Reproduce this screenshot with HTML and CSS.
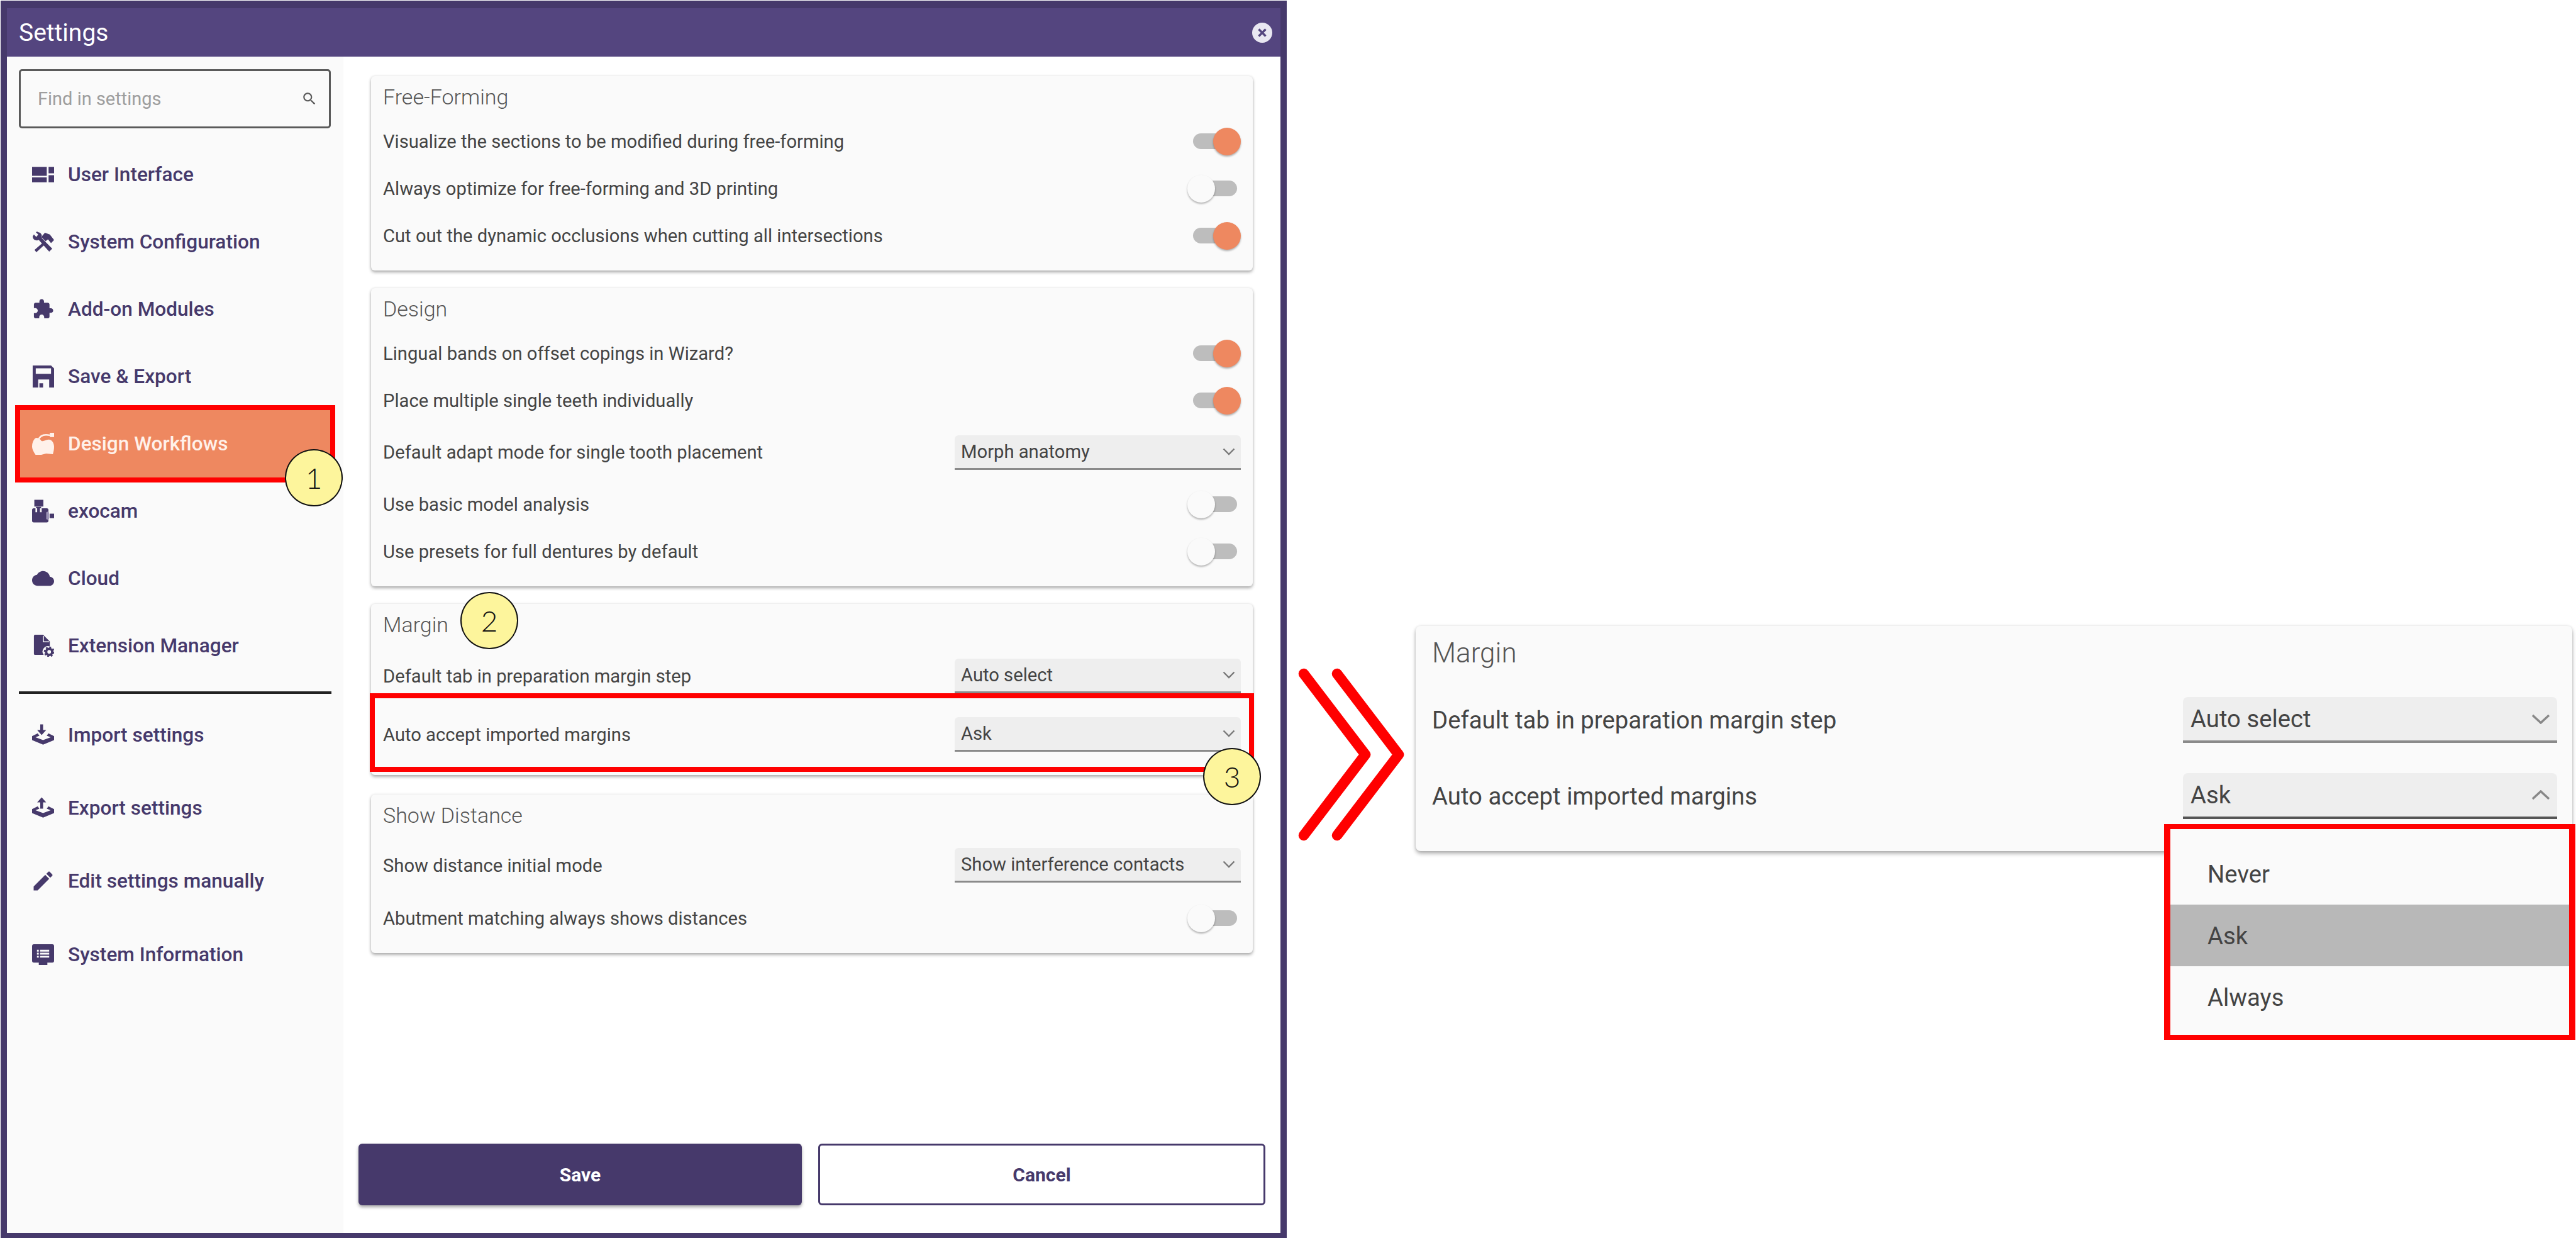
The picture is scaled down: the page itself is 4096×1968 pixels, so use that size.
FILE: index.html
```html
<!DOCTYPE html>
<html lang="en">
<head>
<meta charset="utf-8">
<title>Settings</title>
<link rel="stylesheet" href="styles.css">
</head>
<body>
<div class="page">
  <section class="window">
    <header class="titlebar">
      <h1 class="window-title">Settings</h1>
      <svg class="close" viewBox="0 0 32 32"><circle cx="16" cy="16" r="16" fill="#e9e7f2"/><path d="M10.500 10.500l11 11M21.500 10.500l-11 11" stroke="#54457f" stroke-width="3.400" fill="none"/></svg>
    </header>
    <div class="window-body">
      <aside class="sidebar">
        <div class="search">
          <span class="search-text">Find in settings</span>
          <svg class="search-icon" viewBox="0 0 24 24"><path fill="#5a5a5a" d="M15.500 14h-.79l-.28-.27C15.410 12.590 16 11.110 16 9.500 16 5.910 13.090 3 9.500 3S3 5.910 3 9.500 5.910 16 9.500 16c1.610 0 3.090-.59 4.230-1.570l.27.28v.79l5 4.990L20.490 19l-4.990-5zm-6 0C7.010 14 5 11.990 5 9.500S7.010 5 9.500 5 14 7.010 14 9.500 11.990 14 9.500 14z"/></svg>
        </div>
        <nav class="nav">
          <a class="nav-item"><svg class="icon" viewBox="0 0 36 36"><path d="M0 5.500h24V20H0zM0 22.500h24v8H0zM27 5.500h9V16h-9zM27 19h9v11.500h-9z"/></svg><span>User Interface</span></a>
          <a class="nav-item"><svg class="icon" viewBox="0 0 36 36"><path d="M9 1L6 2l4 4-3 4-4-4-2 3c0 5 5 8 10 6l17 19 5-5-17-17c1-6-2-10-7-10zM15 10l6-7 8 3 7 9-5 5-5-6-4 3zM18 19L4 31l3 4 14-13z"/></svg><span>System Configuration</span></a>
          <a class="nav-item"><svg class="icon" viewBox="0 0 24 24"><path d="M20.500 11H19V7c0-1.100-.9-2-2-2h-4V3.500C13 2.120 11.880 1 10.500 1S8 2.120 8 3.500V5H4c-1.100 0-1.990.9-1.990 2v3.800H3.500c1.490 0 2.700 1.210 2.700 2.700s-1.210 2.700-2.700 2.700H2V20c0 1.100.9 2 2 2h3.800v-1.500c0-1.490 1.210-2.700 2.700-2.700 1.490 0 2.700 1.210 2.700 2.700V22H17c1.100 0 2-.9 2-2v-4h1.500c1.380 0 2.500-1.120 2.500-2.500S21.880 11 20.500 11z"/></svg><span>Add-on Modules</span></a>
          <a class="nav-item"><svg class="icon" viewBox="0 0 36 36"><path fill-rule="evenodd" d="M1 0h30l5 5v31H1zM6 4.500v9h25v-9zM10 23v13h2v-7h6v7h10V23z"/></svg><span>Save &amp; Export</span></a>
          <a class="nav-item nav-item--active">
            <svg class="icon" viewBox="0 0 36 36"><path d="M5 9C9 7 13 10 15 13c4 2 7-2 12-2 6 0 9 6 9 12 0 5-1 8-2 12l-11-1-16 4C4 33 0 28 0 22 0 17 2 12 5 9z"/><path d="M10 12C13 4 20 2 29 4" fill="none" stroke="#fff1ea" stroke-width="2.600"/><path d="M29 0h7v7h-7z"/></svg>
            <span>Design Workflows</span>
            <span class="frame frame--nav"></span>
            <span class="badge badge--one">1</span>
          </a>
          <a class="nav-item"><svg class="icon icon--tall" viewBox="6 8 39 40"><path d="M10 8h16v12H10zM13 20.500h9V23h-9z"/><rect x="6" y="23" width="29" height="25" rx="3"/><path fill="#fafafa" d="M12 23h3v7h-3zM20 23h3v7h-3z"/><rect x="31" y="29" width="5" height="14" rx="2" fill="#9a91b5"/><path d="M37 32.500h8v8h-8z"/></svg><span>exocam</span></a>
          <a class="nav-item"><svg class="icon" viewBox="0 -4 24 24"><path d="M19.350 6.040C18.670 2.590 15.640 0 12 0 9.110 0 6.600 1.640 5.350 4.040 2.340 4.360 0 6.910 0 10c0 3.310 2.690 6 6 6h13c2.760 0 5-2.240 5-5 0-2.640-2.050-4.780-4.650-4.960z"/></svg><span>Cloud</span></a>
          <a class="nav-item"><svg class="icon" viewBox="-3 0 36 36"><path d="M2 0h13l11 11v8a9 9 0 0 0-10 14H2a2 2 0 0 1-2-2V2a2 2 0 0 1 2-2z"/><path d="M15.500 2v9.500H25" fill="none" stroke="#fafafa" stroke-width="1.500"/><circle cx="25" cy="28" r="5" fill="none" stroke="#46396b" stroke-width="4"/><circle cx="25" cy="28" r="7.500" fill="none" stroke="#46396b" stroke-width="2.500" stroke-dasharray="3 2.890"/></svg><span>Extension Manager</span></a>
        </nav>
        <hr class="divider">
        <nav class="nav nav--tools">
          <a class="nav-item"><svg class="icon" viewBox="0 0 39 38"><path d="M14.500 0h5v10h5.500l-8 9-8-9h5.500zM0 21l10-5 3 4-7 3 13.500 5L33 23l-7-3 3-4 10 5v7l-19.500 8L0 28z"/></svg><span>Import settings</span></a>
          <a class="nav-item"><svg class="icon" viewBox="0 0 39 38"><path d="M17 0l8 9h-5.500v11h-5V9H9zM0 21l10-5 3 4-7 3 13.500 5L33 23l-7-3 3-4 10 5v7l-19.500 8L0 28z"/></svg><span>Export settings</span></a>
          <a class="nav-item"><svg class="icon" viewBox="1.500 1.500 21 21"><path d="M3 17.250V21h3.750L17.810 9.940l-3.750-3.750L3 17.250zM20.710 7.040c.39-.39.39-1.020 0-1.410l-2.340-2.340c-.39-.39-1.020-.39-1.410 0l-1.830 1.830 3.750 3.750 1.830-1.830z"/></svg><span>Edit settings manually</span></a>
          <a class="nav-item"><svg class="icon" viewBox="0 -1 36 36"><path fill-rule="evenodd" d="M3 0h30a3 3 0 0 1 3 3v24a3 3 0 0 1-3 3h-8v4H11v-4H3a3 3 0 0 1-3-3V3a3 3 0 0 1 3-3zM8 9v3h3V9zM13 9v3h15V9zM8 14v3h3v-3zM13 14v3h15v-3zM8 19v3h3v-3zM13 19v3h15v-3z"/></svg><span>System Information</span></a>
        </nav>
      </aside>
      <main class="main">
        <section class="card">
          <h2 class="card-title">Free-Forming</h2>
          <div class="row"><span>Visualize the sections to be modified during free-forming</span><span class="toggle toggle--on"><i class="knob"></i></span></div>
          <div class="row"><span>Always optimize for free-forming and 3D printing</span><span class="toggle"><i class="knob"></i></span></div>
          <div class="row"><span>Cut out the dynamic occlusions when cutting all intersections</span><span class="toggle toggle--on"><i class="knob"></i></span></div>
        </section>
        <section class="card">
          <h2 class="card-title">Design</h2>
          <div class="row"><span>Lingual bands on offset copings in Wizard?</span><span class="toggle toggle--on"><i class="knob"></i></span></div>
          <div class="row"><span>Place multiple single teeth individually</span><span class="toggle toggle--on"><i class="knob"></i></span></div>
          <div class="row row--select"><span>Default adapt mode for single tooth placement</span><span class="select"><span>Morph anatomy</span><svg class="chev" viewBox="0 0 20 12"><path d="M1.500 1.500L10 10l8.500-8.500"/></svg></span></div>
          <div class="row"><span>Use basic model analysis</span><span class="toggle"><i class="knob"></i></span></div>
          <div class="row"><span>Use presets for full dentures by default</span><span class="toggle"><i class="knob"></i></span></div>
        </section>
        <section class="card card--margin">
          <h2 class="card-title">Margin</h2>
          <span class="badge badge--two">2</span>
          <div class="row row--tall"><span>Default tab in preparation margin step</span><span class="select"><span>Auto select</span><svg class="chev" viewBox="0 0 20 12"><path d="M1.500 1.500L10 10l8.500-8.500"/></svg></span></div>
          <div class="row row--tall"><span>Auto accept imported margins</span><span class="select"><span>Ask</span><svg class="chev" viewBox="0 0 20 12"><path d="M1.500 1.500L10 10l8.500-8.500"/></svg></span></div>
          <span class="frame frame--row"></span>
          <span class="badge badge--three">3</span>
        </section>
        <section class="card card--distance">
          <h2 class="card-title">Show Distance</h2>
          <div class="row row--tall"><span>Show distance initial mode</span><span class="select"><span>Show interference contacts</span><svg class="chev" viewBox="0 0 20 12"><path d="M1.500 1.500L10 10l8.500-8.500"/></svg></span></div>
          <div class="row"><span>Abutment matching always shows distances</span><span class="toggle"><i class="knob"></i></span></div>
        </section>
        <footer class="actions">
          <button class="btn btn--primary">Save</button>
          <button class="btn btn--ghost">Cancel</button>
        </footer>
      </main>
    </div>
  </section>

  <svg class="arrows" viewBox="0 0 172 285"><path d="M11 14L109 142.500 11 271M64 14L162 142.500 64 271"/></svg>

  <section class="zoom-card">
    <h2 class="zoom-title">Margin</h2>
    <div class="zoom-row"><span>Default tab in preparation margin step</span><span class="zoom-select"><span>Auto select</span><svg class="zoom-chev" viewBox="0 0 30 16"><path d="M2 2l13 12L28 2"/></svg></span></div>
    <div class="zoom-row"><span>Auto accept imported margins</span><span class="zoom-select zoom-select--open"><span>Ask</span><svg class="zoom-chev" viewBox="0 0 30 16"><path d="M2 14L15 2l13 12"/></svg></span></div>
    <ul class="menu">
      <li class="menu-item">Never</li>
      <li class="menu-item menu-item--selected">Ask</li>
      <li class="menu-item">Always</li>
    </ul>
  </section>
</div>
</body>
</html>
```
FILE: styles.css
```css
* { box-sizing: border-box; }
html, body { margin: 0; padding: 0; background: #fff; overflow: hidden; }
body { width: 4096px; height: 1968px; font-family: Roboto, "Liberation Sans", sans-serif; color: #424242; }
h1, h2, ul { margin: 0; padding: 0; font-weight: normal; list-style: none; }

.page { display: flex; align-items: flex-start; width: 4096px; height: 1968px; }

/* settings window */
.window { flex: none; display: flex; flex-direction: column; width: 2045px; height: 1967px; margin: 1px 0 0 1px;
  border: solid #46396b; border-width: 12px 10px 8px; background: #fff; }
.titlebar { flex: none; display: flex; align-items: center; justify-content: space-between; height: 77px; padding: 0 13px 0 19px; background: #54457f; }
.window-title { font-size: 39px; color: #fff; }
.close { width: 32px; height: 32px; }
.window-body { flex: 1; display: flex; min-height: 0; }

/* sidebar */
.sidebar { flex: none; width: 535px; padding: 20px 19px 0; background: #fafafa; }
.search { display: flex; align-items: center; justify-content: space-between; width: 496px; height: 94px; padding: 0 18px 0 27px;
  border: 3px solid #5a5a5a; border-radius: 5px; }
.search-text { font-size: 29px; color: #9e9e9e; }
.search-icon { width: 26px; height: 26px; }
.nav { display: flex; flex-direction: column; margin-top: 20px; }
.nav-item { position: relative; display: flex; align-items: center; gap: 22px; height: 107px; margin: 0 2px; padding-left: 19px;
  font-size: 31.600px; font-weight: 500; color: #46396b; }
.icon { flex: none; width: 35px; height: 35px; fill: #46396b; }
.icon--tall { height: 39px; }
.nav-item--active { background: #ee8860; color: #fff1ea; }
.nav-item--active .icon { fill: #fff1ea; }
.divider { height: 4px; margin: 19px 0 0; border: 0; background: #212121; width: 497px; }
.nav--tools { margin-top: 12px; gap: 9.200px; }

/* annotations */
.frame { position: absolute; border: 8px solid #f00; pointer-events: none; }
.frame--nav { inset: -8px; }
.frame--row { left: -2px; right: -2px; top: 142px; height: 125px; }
.badge { position: absolute; z-index: 2; display: flex; align-items: center; justify-content: center; width: 92px; height: 91px;
  border: 2px solid #111; border-radius: 50%; background: #fdf59c; font-family: Lato, sans-serif; font-weight: 300; font-size: 46px; color: #111; }
.badge--one { left: 421px; top: 62px; }
.badge--two { left: 142px; top: -19px; }
.badge--three { left: 1323px; top: 229px; }

/* cards */
.main { flex: 1; display: flex; flex-direction: column; min-width: 0; padding: 31px 24px 44px 24px; }
.card { position: relative; flex: none; width: 1402px; margin: 0 0 28px 20px; padding: 8px 19px 18px; background: #fafafa; border-radius: 6px;
  box-shadow: 0 3px 5px rgba(0,0,0,.3), 0 0 4px rgba(0,0,0,.1); }
.card-title { height: 50px; margin-bottom: 8px; font-size: 34px; font-weight: 300; line-height: 50px; color: #555; }
.card--margin { z-index: 1; }
.card--margin .card-title { margin-bottom: 10px; }
.card--distance { margin-top: 3px; }
.row { display: flex; align-items: center; justify-content: space-between; height: 75px; font-size: 29.200px; color: #444; }
.row--select { height: 90px; }
.row--tall { height: 93px; }
.toggle { position: relative; flex: none; width: 70px; height: 25px; margin-right: 6px; border-radius: 13px; background: #bdbdbd; }
.knob { position: absolute; top: -9px; left: -9px; width: 44px; height: 44px; border-radius: 50%; background: #fafafa; box-shadow: 0 2px 3px rgba(0,0,0,.3); }
.toggle--on .knob { left: auto; right: -6px; background: #ee8860; }
.select { flex: none; display: flex; align-items: center; justify-content: space-between; width: 455px; height: 55px; padding: 0 9px 0 10px;
  background: #eee; border-bottom: 3.500px solid #8a8a8a; border-radius: 6px 6px 0 0; font-size: 29.200px; color: #444; }
.chev { width: 20px; height: 12px; fill: none; stroke: #777; stroke-width: 2.400; }

/* footer */
.actions { display: flex; gap: 26px; margin-top: auto; }
.btn { flex: 1; height: 98px; border-radius: 6px; font-family: Roboto, sans-serif; font-size: 30px; font-weight: 700; }
.btn--primary { background: #46396b; color: #fff; border: 0; box-shadow: 0 3px 5px rgba(0,0,0,.35); }
.btn--ghost { background: #fff; color: #46396b; border: 3px solid #46396b; }

/* arrows */
.arrows { flex: none; width: 172px; height: 285px; margin: 1057px 0 0 16px; fill: none; stroke: #f00; stroke-width: 16.500; stroke-linecap: round; stroke-linejoin: round; }

/* magnified panel */
.zoom-card { position: relative; flex: none; width: 1839px; height: 358px; margin: 995px 0 0 17px; padding: 0 24px 0 26px; background: #fafafa; border-radius: 8px;
  box-shadow: 0 4px 6px rgba(0,0,0,.3), 0 0 4px rgba(0,0,0,.1); }
.zoom-title { height: 86px; margin-bottom: 3px; font-size: 44px; font-weight: 300; line-height: 86px; color: #555; }
.zoom-row { display: flex; align-items: center; justify-content: space-between; height: 121px; font-size: 38.300px; color: #444; }
.zoom-select { flex: none; display: flex; align-items: center; justify-content: space-between; width: 595px; height: 73px; padding: 0 11px 0 12px;
  background: #eee; border-bottom: 4.500px solid #8a8a8a; border-radius: 8px 8px 0 0; font-size: 38.300px; }
.zoom-select--open { border-bottom-color: #555; }
.zoom-chev { width: 30px; height: 16px; fill: none; stroke: #888; stroke-width: 3.500; }
.menu { position: absolute; left: 1190px; top: 315px; width: 654px; height: 343px; padding-top: 22px; border: solid #f00; border-width: 8.500px 10px; background: #fafafa; }
.menu-item { display: flex; align-items: center; height: 98px; padding-left: 59px; font-size: 38.300px; color: #444; }
.menu-item--selected { background: #b8b8b8; }
```
